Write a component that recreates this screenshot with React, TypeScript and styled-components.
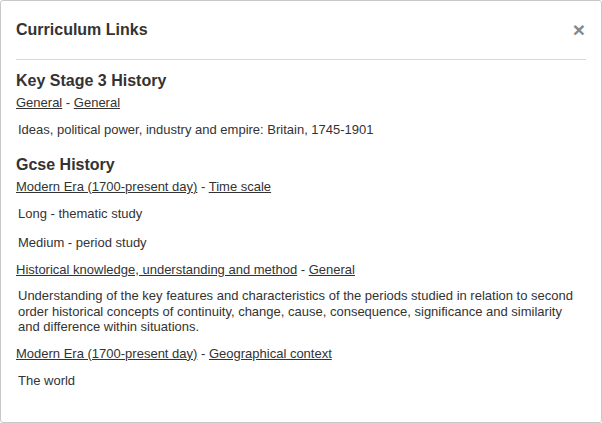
import React from "react";
import styled, { createGlobalStyle } from "styled-components";

const Global = createGlobalStyle`
  html, body { margin: 0; padding: 0; background: #fff; }
  body { font-family: "Liberation Sans", Arial, Helvetica, sans-serif; color: #333; }
  * { box-sizing: border-box; }
`;

const Modal = styled.div`
  width: 602px;
  height: 423px;
  border: 1px solid #c8c8c8;
  border-radius: 3px;
  background: #fff;
  display: flex;
  flex-direction: column;
`;

const Header = styled.div`
  margin: 0 15px;
  padding: 20px 0 20px;
  border-bottom: 1px solid #d9d9d9;
  display: flex;
  align-items: center;
  justify-content: space-between;
`;

const Title = styled.h3`
  margin: 0;
  font-size: 16px;
  font-weight: bold;
  line-height: 18px;
  color: #333;
`;

const Close = styled.button`
  border: 0;
  background: none;
  padding: 0;
  margin-right: 1px;
  font-family: "Liberation Sans", Arial, sans-serif;
  font-size: 21px;
  font-weight: bold;
  line-height: 18px;
  color: #888;
  cursor: pointer;
`;

const Body = styled.div`
  padding: 12px 15px 15px;
`;

const Section = styled.section`
  & + & { margin-top: 17px; }
`;

const SubjectTitle = styled.h4`
  margin: 0 0 4px;
  font-size: 16px;
  font-weight: bold;
  line-height: 18px;
`;

const LinkRow = styled.div`
  font-size: 13px;
  line-height: 18px;
  margin-bottom: 9px;
`;

const Link = styled.a`
  color: #333;
  text-decoration: underline;
`;

const Desc = styled.p`
  margin: 0 0 9px;
  padding-left: 2px;
  font-size: 13px;
  line-height: 18px;
  & + & { margin-top: 11px; }
`;

const LongDesc = styled(Desc)`
  line-height: 15.6px;
  margin-bottom: 10px;
`;

type Group = { a: string; b: string; items: { text: string; long?: boolean }[] };

const data: { title: string; groups: Group[] }[] = [
  {
    title: "Key Stage 3 History",
    groups: [
      {
        a: "General",
        b: "General",
        items: [{ text: "Ideas, political power, industry and empire: Britain, 1745-1901" }],
      },
    ],
  },
  {
    title: "Gcse History",
    groups: [
      {
        a: "Modern Era (1700-present day)",
        b: "Time scale",
        items: [{ text: "Long - thematic study" }, { text: "Medium - period study" }],
      },
      {
        a: "Historical knowledge, understanding and method",
        b: "General",
        items: [
          {
            text: "Understanding of the key features and characteristics of the periods studied in relation to second order historical concepts of continuity, change, cause, consequence, significance and similarity and difference within situations.",
            long: true,
          },
        ],
      },
      {
        a: "Modern Era (1700-present day)",
        b: "Geographical context",
        items: [{ text: "The world" }],
      },
    ],
  },
];

export default function App() {
  return (
    <>
      <Global />
      <Modal>
        <Header>
          <Title>Curriculum Links</Title>
          <Close aria-label="Close">×</Close>
        </Header>
        <Body>
          {data.map((s) => (
            <Section key={s.title}>
              <SubjectTitle>{s.title}</SubjectTitle>
              {s.groups.map((g, i) => (
                <div key={i}>
                  <LinkRow>
                    <Link href="#">{g.a}</Link> - <Link href="#">{g.b}</Link>
                  </LinkRow>
                  {g.items.map((it, j) =>
                    it.long ? (
                      <LongDesc key={j}>{it.text}</LongDesc>
                    ) : (
                      <Desc key={j}>{it.text}</Desc>
                    )
                  )}
                </div>
              ))}
            </Section>
          ))}
        </Body>
      </Modal>
    </>
  );
}
